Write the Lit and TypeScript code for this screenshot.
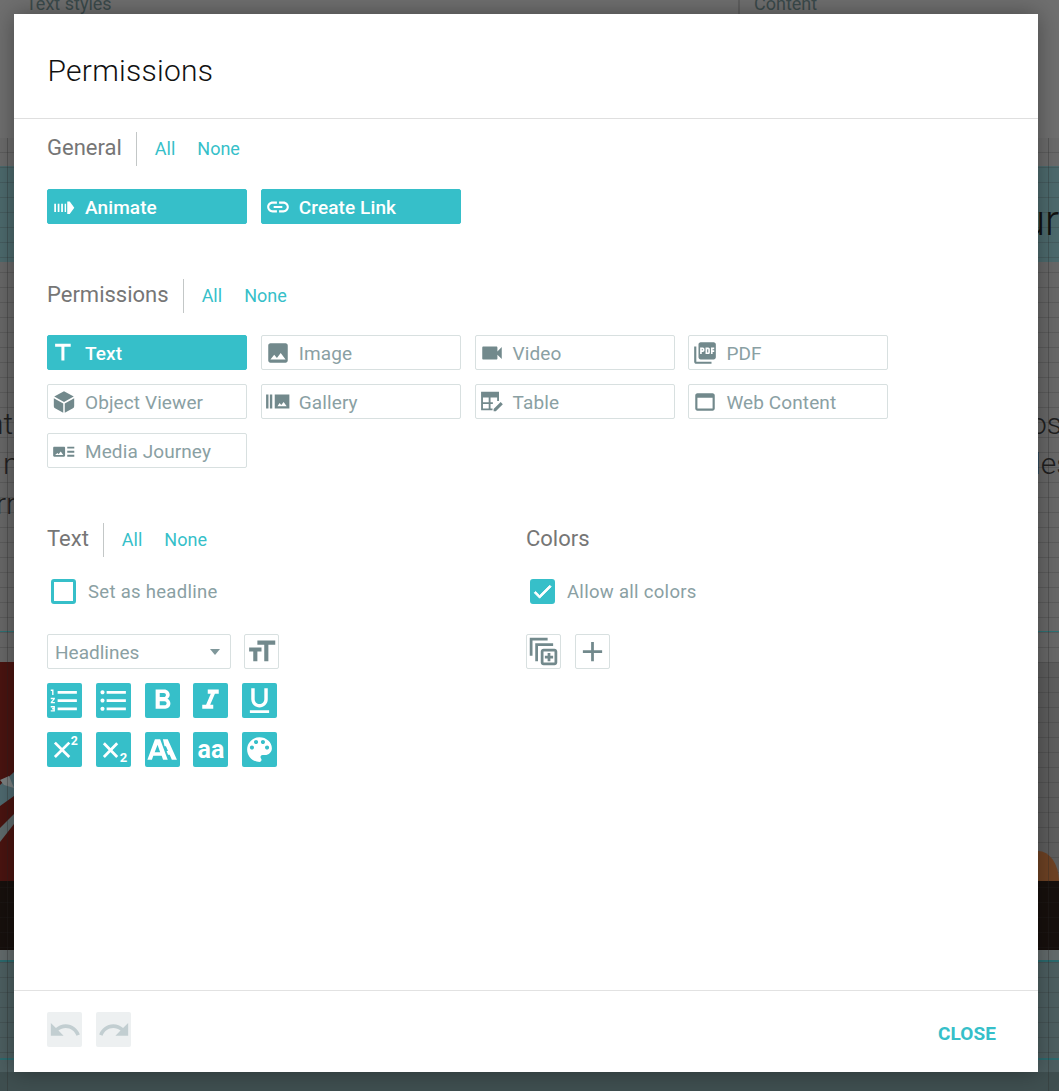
import { LitElement, html, css, svg } from "lit";
import { customElement } from "lit/decorators.js";

const P: Record<string, any> = {
  animate: svg`<path d="M3 9h1.600v7.500H3zM6.200 9h1.600v7.500H6.200zM9.400 9h1.600v7.500H9.400zM12.600 9h1.300v7.500h-1.300zM15 7h2.300l4.200 5.700-4.200 5.800H15z"/>`,
  link: svg`<path d="M3.900 12c0-1.710 1.390-3.100 3.100-3.100h4V7H7c-2.760 0-5 2.240-5 5s2.240 5 5 5h4v-1.900H7c-1.710 0-3.100-1.390-3.100-3.100zM8 13h8v-2H8v2zm9-6h-4v1.900h4c1.710 0 3.100 1.390 3.100 3.100s-1.390 3.100-3.100 3.100h-4V17h4c2.760 0 5-2.240 5-5s-2.240-5-5-5z"/>`,
  text: svg`<path d="M3.800 3.500v2.800h5.800v12.700h2.800V6.300h5.800V3.500z"/>`,
  image: svg`<path d="M21 19V5c0-1.100-.9-2-2-2H5c-1.100 0-2 .9-2 2v14c0 1.100.9 2 2 2h14c1.100 0 2-.9 2-2zM8.500 13.500l2.500 3.010L14.500 12l4.500 6H5l3.500-4.500z"/>`,
  video: svg`<path d="M17 10.500V7c0-.55-.45-1-1-1H4c-.55 0-1 .45-1 1v10c0 .55.45 1 1 1h12c.55 0 1-.45 1-1v-3.500l4 4v-11l-4 4z"/>`,
  pdf: svg`<path d="M20 2H8c-1.100 0-2 .9-2 2v12c0 1.100.9 2 2 2h12c1.100 0 2-.9 2-2V4c0-1.100-.9-2-2-2zm-8.500 7.500c0 .83-.67 1.500-1.500 1.500H9v2H7.500V7H10c.83 0 1.500.67 1.500 1.500v1zm5 2c0 .83-.67 1.500-1.500 1.500h-2.500V7H15c.83 0 1.500.67 1.500 1.500v3zm4-3H19v1h1.500V11H19v2h-1.500V7h3v1.500zM9 9.500h1v-1H9v1zM4 6H2v14c0 1.100.9 2 2 2h14v-2H4V6zm10 5.500h1v-3h-1v3z"/>`,
  cube: svg`<path d="M12 2l9 5-9 5-9-5zM2.600 8.500l8.700 4.900V22l-7.600-4.300c-.7-.4-1.100-1-1.100-1.800zM21.400 8.500l-8.700 4.900V22l7.600-4.300c.7-.4 1.100-1 1.100-1.800z"/>`,
  gallery: svg`<path d="M1 5h2.200v13H1zM4.500 5h2.200v13H4.500z"/><path fill-rule="evenodd" d="M9 5h13.500v13H9zm2.500 11h8.500l-2.800-4-2.200 2.700-1.500-1.700z"/>`,
  table: svg`<path fill="none" stroke="currentColor" stroke-width="1.700" d="M12.500 18.800H2.800V3.500h14.800V11 M2.800 7h14.800 M9.800 7v11.800 M2.800 13h10"/><path d="M2.500 2.800h15.300V7H2.500zM13.500 18.500L20 12l2 2-6.500 6.500h-2z"/>`,
  web: svg`<path d="M19 4H5c-1.110 0-2 .9-2 2v12c0 1.100.89 2 2 2h14c1.100 0 2-.9 2-2V6c0-1.100-.89-2-2-2zm0 14H5V8h14v10z"/>`,
  journey: svg`<path fill-rule="evenodd" d="M3 8h9c.6 0 1 .4 1 1v7.200c0 .6-.4 1-1 1H3c-.6 0-1-.4-1-1V9c0-.6.4-1 1-1zm.800 7.800h7.500L9 12.500l-2 2.400-1-1zM15 8h6.500v1.700H15zM15 11.800h6.500v1.700H15zM15 15.500h6.500v1.700H15z"/>`,
  size: svg`<path d="M9 4v3h5v12h3V7h5V4H9zm-6 8h3v7h3v-7h3V9H3v3z"/>`,
  num: svg`<path d="M2 17h2v.5H3v1h1v.5H2v1h3v-4H2v1zm1-9h1V4H2v1h1v3zm-1 3h1.800L2 13.100v.9h3v-1H3.200L5 10.900V10H2v1zm5-6v2h14V5H7zm0 14h14v-2H7v2zm0-6h14v-2H7v2z"/>`,
  bul: svg`<path d="M4 10.500c-.83 0-1.500.67-1.500 1.500s.67 1.500 1.500 1.500 1.500-.67 1.500-1.500-.67-1.500-1.500-1.500zm0-6c-.83 0-1.500.67-1.500 1.500S3.170 7.500 4 7.500 5.500 6.830 5.500 6 4.830 4.500 4 4.500zm0 12c-.83 0-1.500.68-1.500 1.500s.68 1.500 1.500 1.500 1.500-.68 1.500-1.500-.67-1.500-1.500-1.500zM7 19h14v-2H7v2zm0-6h14v-2H7v2zm0-8v2h14V5H7z"/>`,
  bold: svg`<path d="M15.600 10.790c.97-.67 1.650-1.770 1.650-2.790 0-2.260-1.750-4-4-4H7v14h7.040c2.090 0 3.710-1.700 3.710-3.790 0-1.520-.86-2.820-2.150-3.420zM10 6.500h3c.83 0 1.500.67 1.500 1.500s-.67 1.500-1.500 1.500h-3v-3zm3.500 9H10v-3h3.500c.83 0 1.500.67 1.500 1.500s-.67 1.500-1.500 1.500z"/>`,
  italic: svg`<path d="M10 4v3h2.210l-3.420 8H6v3h8v-3h-2.210l3.420-8H18V4z"/>`,
  under: svg`<path d="M12 17c3.310 0 6-2.690 6-6V3h-2.500v8c0 1.930-1.570 3.500-3.500 3.500S8.500 12.930 8.500 11V3H6v8c0 3.310 2.690 6 6 6zm-7 2v2h14v-2H5z"/>`,
  sup: svg`<path fill="none" stroke="currentColor" stroke-width="2" d="M5 7l10.500 10.500M15.500 7L5 17.500"/><text x="16.500" y="8.800" font-size="9" font-weight="700" font-family="Roboto, sans-serif">2</text>`,
  sub: svg`<path fill="none" stroke="currentColor" stroke-width="2" d="M5 7.500l9.700 10M14.700 7.500L5 17.500"/><text x="16.500" y="21" font-size="9.500" font-weight="700" font-family="Roboto, sans-serif">2</text>`,
  fonts: svg`<path fill-rule="evenodd" d="M6.500 4.500h3.800L15.800 19.500h-3.400l-1-3H5.300l-1 3H1zM8.400 8.500L6.300 14h4zM12.300 4.500h3.500l6.700 15h-3.700l-1.600-3.700h-1.200l-1-2.800h1l-1.500-3.400h-1z"/>`,
  palette: svg`<path d="M12 3c-4.970 0-9 4.030-9 9s4.030 9 9 9c.83 0 1.500-.67 1.500-1.500 0-.39-.15-.74-.39-1.010-.23-.26-.38-.61-.38-.99 0-.83.67-1.500 1.500-1.500H16c2.760 0 5-2.240 5-5 0-4.420-4.030-8-9-8zm-5.500 9c-.83 0-1.500-.67-1.500-1.500S5.670 9 6.500 9 8 9.670 8 10.500 7.330 12 6.500 12zm3-4C8.670 8 8 7.330 8 6.500S8.670 5 9.500 5s1.500.67 1.500 1.500S10.330 8 9.500 8zm5 0c-.83 0-1.500-.67-1.500-1.500S13.670 5 14.500 5s1.500.67 1.500 1.500S15.330 8 14.500 8zm3 4c-.83 0-1.500-.67-1.500-1.500S16.670 9 17.500 9s1.500.67 1.500 1.500-.67 1.500-1.500 1.500z"/>`,
  undo: svg`<path d="M12.500 8c-2.650 0-5.050.99-6.900 2.600L2 7v9h9l-3.620-3.620c1.390-1.160 3.160-1.880 5.120-1.880 3.540 0 6.550 2.310 7.600 5.500l2.370-.78C21.080 11.030 17.150 8 12.500 8z"/>`,
  redo: svg`<path d="M18.400 10.600C16.550 8.990 14.150 8 11.500 8c-4.650 0-8.580 3.030-9.960 7.220L3.900 16c1.050-3.190 4.050-5.500 7.600-5.500 1.950 0 3.730.72 5.120 1.880L13 16h9V7l-3.600 3.600z"/>`,
  libadd: svg`<path fill-rule="evenodd" d="M2 2h13v2H4v11H2zM6 6h13v2H8v11H6zM12 10h8c1.100 0 2 .9 2 2v8c0 1.100-.9 2-2 2h-8c-1.100 0-2-.9-2-2v-8c0-1.100.9-2 2-2zm0 2v8h8v-8zm3 1h2v2h2v2h-2v2h-2v-2h-2v-2h2z"/>`,
  add: svg`<path d="M19 13h-6v6h-2v-6H5v-2h6V5h2v6h6v2z"/>`,
  check: svg`<path stroke="currentColor" stroke-width="1" d="M9 16.200L4.800 12l-1.400 1.400L9 19 21 7l-1.400-1.400z"/>`,
};

const icon = (n: string, cls = "") => html`<svg class="ic ${cls}" viewBox="0 0 24 24" fill="currentColor" aria-hidden="true">${P[n]}</svg>`;

const general = [["animate", "Animate"], ["link", "Create Link"]];
const perms = [
  ["text", "Text", true], ["image", "Image"], ["video", "Video"], ["pdf", "PDF"],
  ["cube", "Object Viewer"], ["gallery", "Gallery"], ["table", "Table"], ["web", "Web Content"],
  ["journey", "Media Journey"],
];
const tools = ["num", "bul", "bold", "italic", "under", "sup", "sub", "fonts", "aa", "palette"];

@customElement("app-root")
export class AppRoot extends LitElement {
  static styles = css`
    :host { display: block; width: 1059px; height: 1091px; position: relative; overflow: hidden; font-family: Roboto, "Liberation Sans", sans-serif; }
    .bg { position: absolute; inset: 0; overflow: hidden;
      background:
        repeating-linear-gradient(to bottom, transparent 0 14px, rgba(40,40,40,.2) 14px 15px) 0 138px / 100% 924px no-repeat,
        linear-gradient(to bottom, #6f6f6f 0 138px, #6b6b6b 138px 166px, #4d6a6d 166px 262px, #686868 262px 631px, #2f7275 631px 632px, #686868 632px 662px, #5e5e5e 662px 881px, #17100d 881px 950px, #636b6c 950px 960px, #2c6a6e 960px 962px, #4d5f61 962px 1058px, #2c6a6e 1058px 1060px, #4d5f61 1060px 1072px, #3f4f50 1072px);
    }
    .vl { position: absolute; top: 138px; bottom: 0; width: 1px; background: rgba(40,40,40,.3); }
    .topdiv { position: absolute; left: 738px; top: 0; width: 2px; height: 14px; background: #5f5f5f; }
    .red { position: absolute; left: 0; top: 662px; width: 14px; height: 219px; background: #4a1410; }
    .orange { position: absolute; left: 1038px; top: 850px; width: 21px; height: 31px; background: #6e4224; clip-path: ellipse(21px 30px at 0 31px); }
    .swirl { position: absolute; left: 0; top: 740px; width: 14px; height: 110px; }
    .bgt { position: absolute; color: #3b4a4b; white-space: nowrap; line-height: 1; }
    .small { font-size: 18px; }
    .big { font-size: 30px; font-weight: 300; color: #1f1f1f; }
    .huge { font-size: 42px; font-weight: 300; color: #111; }

    .dialog { position: absolute; left: 14px; top: 14px; width: 1024px; height: 1058px; background: #fff; box-shadow: 0 0 22px rgba(0,0,0,.35); display: flex; flex-direction: column; }
    header { height: 105px; border-bottom: 1px solid #dfdfdf; padding: 8px 0 0 33.500px; display: flex; align-items: center; box-sizing: border-box; font-size: 30px; font-weight: 300; color: #111; flex: none; letter-spacing: .25px; }
    .body { flex: 1; padding: 13px 33px 0; position: relative; }
    .head { display: flex; align-items: center; height: 34px; }
    .title { font-size: 22px; color: #767676; line-height: 30px; position: relative; top: -1px; }
    .sep { width: 1px; height: 34px; background: #c3c7c7; margin: 0 18px 0 14px; }
    .link { color: #36bfc9; font-size: 18px; margin-right: 22px; position: relative; top: -1px; }
    .grid { display: grid; grid-template-columns: repeat(4, 200px); column-gap: 13.800px; row-gap: 14px; }
    .btn { height: 35px; box-sizing: border-box; border: 1px solid #d8e0e0; border-radius: 2px; background: #fff; color: #8aa0a3; display: flex; align-items: center; padding-left: 3px; font-size: 19px; letter-spacing: .1px; }
    .btn span { position: relative; top: 1px; }
    .btn .ic { width: 26px; height: 26px; margin-right: 8px; color: #72898c; flex: none; }
    .btn.on { background: #36bfc9; border-color: #36bfc9; color: #fff; font-weight: 500; }
    .btn.on .ic { color: #fff; }
    .general { margin-top: 23px; }
    .perm-head { margin-top: 55px; }
    .perm-grid { margin-top: 22px; }
    .cols { display: flex; margin-top: 55px; }
    .col-l { width: 479px; }
    .check { display: flex; align-items: center; height: 25px; margin: 22px 0 0 4px; color: #8aa0a3; font-size: 18.500px; letter-spacing: .3px; }
    .box { width: 25px; height: 25px; box-sizing: border-box; border: 3px solid #36bfc9; border-radius: 3px; margin-right: 12px; flex: none; }
    .box.on { background: #36bfc9; color: #fff; display: flex; align-items: center; justify-content: center; }
    .box .ic { width: 23px; height: 23px; flex: none; }
    .row { display: flex; gap: 13px; margin-top: 30px; }
    .select { width: 184px; height: 35px; box-sizing: border-box; border: 1px solid #d8e0e0; border-radius: 2px; display: flex; align-items: center; justify-content: space-between; padding: 2px 10px 0 7px; color: #8aa0a3; font-size: 19px; }
    .caret { width: 0; height: 0; border: 5.500px solid transparent; border-top: 6px solid #7f979a; border-bottom: 0; margin-top: -2px; }
    .sq { width: 35px; height: 35px; box-sizing: border-box; border: 1px solid #d8e0e0; border-radius: 2px; display: flex; align-items: center; justify-content: center; color: #72898c; flex: none; }
    .sq .ic { width: 33px; height: 33px; flex: none; }
    .tools { display: grid; grid-template-columns: repeat(5, 35px); column-gap: 13.800px; row-gap: 14px; margin-top: 14px; }
    .t { width: 35px; height: 35px; background: #36bfc9; border-radius: 2px; color: #fff; display: flex; align-items: center; justify-content: center; }
    .t .ic { width: 33px; height: 33px; flex: none; }
    .aa { font-size: 25px; font-weight: 700; line-height: 1; letter-spacing: 0; }
    .colors-row { gap: 14px; }
    footer { height: 82px; box-sizing: border-box; border-top: 1px solid #e2e2e2; flex: none; display: flex; align-items: flex-start; padding: 21px 42px 0 33px; gap: 14px; }
    .ghost { width: 35px; height: 35px; background: #edf0f1; border-radius: 2px; color: #c2ced1; display: flex; align-items: center; justify-content: center; }
    .ghost .ic { width: 34px; height: 34px; flex: none; }
    .close { margin-left: auto; color: #36bfc9; font-size: 19px; font-weight: 700; line-height: 44px; letter-spacing: .1px; }
  `;

  private head(t: string, cls = "") {
    return html`<div class="head ${cls}"><span class="title">${t}</span><span class="sep"></span><span class="link">All</span><span class="link">None</span></div>`;
  }

  private button(b: any[]) {
    return html`<div class="btn ${b[2] ? "on" : ""}">${icon(b[0])}<span>${b[1]}</span></div>`;
  }

  render() {
    return html`
      <div class="bg" aria-hidden="true">
        <div class="red"></div>
        <svg class="swirl" viewBox="0 0 14 110"><path d="M0 45 L14 32 V56 L0 66z" fill="#4f6a70"/><path d="M0 88 L14 74 V84 L0 102z" fill="#5f6b6d"/><path d="M0 40 L9 36 L14 48 L4 45z" fill="#7c8282"/></svg>
        <div class="orange"></div>
        <div class="vl" style="left:7px"></div>
        <div class="vl" style="left:1048px"></div>
        <div class="topdiv"></div>
        <span class="bgt small" style="left:26px;top:-5px">Text styles</span>
        <span class="bgt small" style="left:754px;top:-5px">Content</span>
        <span class="bgt huge" style="left:1022px;top:200px">ur</span>
        <span class="bgt big" style="left:-13px;top:409px">nt</span>
        <span class="bgt big" style="left:3px;top:449px">n</span>
        <span class="bgt big" style="left:-4px;top:489px">rr</span>
        <span class="bgt big" style="left:1030px;top:409px">os</span>
        <span class="bgt big" style="left:1024px;top:449px">des</span>
      </div>
      <div class="dialog">
        <header>Permissions</header>
        <div class="body">
          ${this.head("General")}
          <div class="grid general">${general.map((b) => this.button([...b, true]))}</div>
          ${this.head("Permissions", "perm-head")}
          <div class="grid perm-grid">${perms.map((b) => this.button(b))}</div>
          <div class="cols">
            <div class="col-l">
              ${this.head("Text")}
              <div class="check"><span class="box"></span>Set as headline</div>
              <div class="row">
                <div class="select">Headlines<span class="caret"></span></div>
                <div class="sq">${icon("size")}</div>
              </div>
              <div class="tools">
                ${tools.map((t) => html`<div class="t">${t === "aa" ? html`<span class="aa">aa</span>` : icon(t)}</div>`)}
              </div>
            </div>
            <div>
              <div class="head"><span class="title">Colors</span></div>
              <div class="check"><span class="box on">${icon("check")}</span>Allow all colors</div>
              <div class="row colors-row">
                <div class="sq">${icon("libadd")}</div>
                <div class="sq">${icon("add")}</div>
              </div>
            </div>
          </div>
        </div>
        <footer>
          <div class="ghost">${icon("undo")}</div>
          <div class="ghost">${icon("redo")}</div>
          <span class="close">CLOSE</span>
        </footer>
      </div>
    `;
  }
}
